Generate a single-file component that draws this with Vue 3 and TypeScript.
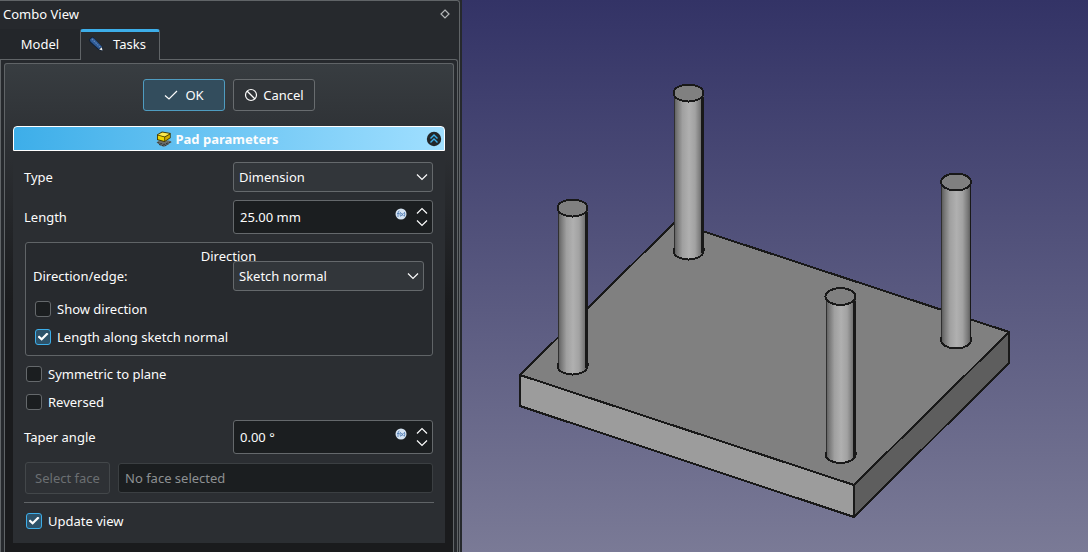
<script setup lang="ts">
import { ref } from 'vue'

interface Peg {
  x: number
  y: number
  edge: number
}

const activeTab = ref<'model' | 'tasks'>('tasks')
const padType = ref('Dimension')
const padLength = ref('25.00 mm')
const directionEdge = ref('Sketch normal')
const showDirection = ref(false)
const alongNormal = ref(true)
const symmetric = ref(false)
const reversed = ref(false)
const taper = ref('0.00 °')
const updateView = ref(true)

// Centre of each top cap, painted from back to front
const pegs: Peg[] = [
  { x: 226.5, y: 93, edge: 2.5 },
  { x: 494, y: 182, edge: 1.5 },
  { x: 110.5, y: 208, edge: 2.5 },
  { x: 378.5, y: 296.5, edge: 2.5 },
]

function step(value: string, delta: number): string {
  const [amount, unit] = value.split(' ')
  return `${(parseFloat(amount) + delta).toFixed(2)} ${unit ?? ''}`.trim()
}
</script>

<template>
  <div class="window">
    <aside class="dock">
      <header class="dock-title">
        <span>Combo View</span>
        <button type="button" class="float-btn" aria-label="Float panel">
          <svg viewBox="0 0 10 10" width="10" height="10"><path d="M5 1 9 5 5 9 1 5Z" fill="none" stroke="#b4b7b9" stroke-width="1.200" /></svg>
        </button>
      </header>

      <div class="tabs" role="tablist">
        <button type="button" role="tab" class="tab" :class="{ active: activeTab === 'model' }" :aria-selected="activeTab === 'model'" @click="activeTab = 'model'">Model</button>
        <button type="button" role="tab" class="tab" :class="{ active: activeTab === 'tasks' }" :aria-selected="activeTab === 'tasks'" @click="activeTab = 'tasks'">
          <svg viewBox="0 0 16 16" width="16" height="16">
            <path d="M4.500 0.500 0.800 3.500 2 6.500 10.500 14 14.500 15 14.800 11.500 7 3Z" fill="#0f2038" />
            <path d="M4.300 1.500 1.800 3.700 2.700 5.800 10.800 13 14 10.800 6.300 2.800Z" fill="#2f5b96" />
            <path d="M4 3 12.500 11.500" stroke="#6286b8" stroke-width="1.200" stroke-dasharray="1.500 1" />
            <path d="M11.200 13.500 13.800 11.300 14.500 14.400Z" fill="#eeeeec" />
          </svg>
          Tasks
        </button>
      </div>

      <div class="pane">
        <div class="frame">
          <div class="actions">
            <button type="button" class="btn primary">
              <svg viewBox="0 0 14 14" width="14" height="14"><path d="M1 7.500 5 11 13 3" fill="none" stroke="#fcfcfc" stroke-width="1.200" /></svg>
              OK
            </button>
            <button type="button" class="btn">
              <svg viewBox="0 0 14 14" width="14" height="14"><g fill="none" stroke="#fcfcfc" stroke-width="1.200"><circle cx="7" cy="7" r="5.500" /><path d="M3 3 11 11" /></g></svg>
              Cancel
            </button>
          </div>

          <section class="task">
            <header class="task-head">
              <svg viewBox="0 0 16 16" width="16" height="16">
                <path d="M0.500 11.500 3 9.500 13 9.500 15.800 11 9 15.500 6 15.200Z" fill="#6b6e6b" />
                <path d="M1.500 11.500 8 13.500 15 10.800M3 13.500 8 15 12.500 13" fill="none" stroke="#2e3436" stroke-dasharray="2 1" />
                <path d="M1 3.500 6 0.500 14.700 2 14.700 7 8.500 11 1 9Z" fill="#403800" />
                <path d="M2 3.800 6.300 1.400 13.500 2.700 8.700 5.500Z" fill="#fce94f" />
                <path d="M1.900 4.600 8.300 6.300 8.300 10 1.900 8.300Z" fill="#edd400" />
                <path d="M9.100 6.300 13.900 3.500 13.900 6.600 9.100 9.800Z" fill="#d0ac00" />
              </svg>
              <h2>Pad parameters</h2>
              <button type="button" class="collapse" aria-label="Collapse">
                <svg viewBox="0 0 16 16" width="16" height="16">
                  <circle cx="8" cy="8" r="7.200" fill="#232629" />
                  <path d="M4.500 7.500 8 4 11.500 7.500M4.500 11.500 8 8 11.500 11.500" fill="none" stroke="#3daee9" stroke-width="1.400" />
                </svg>
              </button>
            </header>

            <form class="form" @submit.prevent>
              <div class="row">
                <label for="type">Type</label>
                <div class="field">
                  <select id="type" v-model="padType" class="box combo">
                    <option>Dimension</option>
                    <option>Through all</option>
                    <option>To first</option>
                  </select>
                  <svg class="chevron" viewBox="0 0 12 8" width="12" height="8"><path d="M1 1.500 6 6.500 11 1.500" /></svg>
                </div>
              </div>

              <div class="row">
                <label for="length">Length</label>
                <div class="field">
                  <input id="length" v-model="padLength" type="text" class="box spin">
                  <button type="button" class="fx" aria-label="Length expression">
                    <svg viewBox="0 0 12 12" width="12" height="12"><circle cx="6" cy="6" r="5.500" fill="#d5e3f2" /><path d="M4.500 3Q3 3 3 5V9M2 5.500H4.500M5.500 4Q4.500 6 5.500 8.500M6.200 5 8.500 8M8.500 5 6.200 8M9.300 4Q10.300 6 9.300 8.500" fill="none" stroke="#5680b5" stroke-width="0.900" /></svg>
                  </button>
                  <div class="steps">
                    <button type="button" aria-label="Increase length" @click="padLength = step(padLength, 1)"><svg viewBox="0 0 12 8" width="12" height="8"><path d="M1 6.500 6 1.500 11 6.500" /></svg></button>
                    <button type="button" aria-label="Decrease length" @click="padLength = step(padLength, -1)"><svg viewBox="0 0 12 8" width="12" height="8"><path d="M1 1.500 6 6.500 11 1.500" /></svg></button>
                  </div>
                </div>
              </div>

              <fieldset class="group">
                <legend>Direction</legend>
                <div class="row inner">
                  <label for="edge">Direction/edge:</label>
                  <div class="field">
                    <select id="edge" v-model="directionEdge" class="box combo">
                      <option>Sketch normal</option>
                      <option>Select reference...</option>
                      <option>Custom direction</option>
                    </select>
                    <svg class="chevron" viewBox="0 0 12 8" width="12" height="8"><path d="M1 1.500 6 6.500 11 1.500" /></svg>
                  </div>
                </div>
                <label class="check first"><input v-model="showDirection" type="checkbox">Show direction</label>
                <label class="check"><input v-model="alongNormal" type="checkbox">Length along sketch normal</label>
              </fieldset>

              <div class="checks">
                <label class="check"><input v-model="symmetric" type="checkbox">Symmetric to plane</label>
                <label class="check"><input v-model="reversed" type="checkbox">Reversed</label>
              </div>

              <div class="row">
                <label for="taper">Taper angle</label>
                <div class="field">
                  <input id="taper" v-model="taper" type="text" class="box spin">
                  <button type="button" class="fx" aria-label="Taper expression">
                    <svg viewBox="0 0 12 12" width="12" height="12"><circle cx="6" cy="6" r="5.500" fill="#d5e3f2" /><path d="M4.500 3Q3 3 3 5V9M2 5.500H4.500M5.500 4Q4.500 6 5.500 8.500M6.200 5 8.500 8M8.500 5 6.200 8M9.300 4Q10.300 6 9.300 8.500" fill="none" stroke="#5680b5" stroke-width="0.900" /></svg>
                  </button>
                  <div class="steps">
                    <button type="button" aria-label="Increase angle" @click="taper = step(taper, 1)"><svg viewBox="0 0 12 8" width="12" height="8"><path d="M1 6.500 6 1.500 11 6.500" /></svg></button>
                    <button type="button" aria-label="Decrease angle" @click="taper = step(taper, -1)"><svg viewBox="0 0 12 8" width="12" height="8"><path d="M1 1.500 6 6.500 11 1.500" /></svg></button>
                  </div>
                </div>
              </div>

              <div class="face">
                <button type="button" class="btn" disabled>Select face</button>
                <input type="text" class="box" value="No face selected" aria-label="Selected face" disabled>
              </div>

              <hr>
              <label class="check last"><input v-model="updateView" type="checkbox">Update view</label>
            </form>
          </section>
        </div>
      </div>
    </aside>

    <main class="viewer">
      <svg viewBox="0 0 626 552" class="scene" role="img" aria-label="Plate with four pegs">
        <defs>
          <linearGradient id="metal">
            <stop offset="0" stop-color="#555" />
            <stop offset="0.12" stop-color="#777" />
            <stop offset="0.3" stop-color="#a0a0a0" />
            <stop offset="0.52" stop-color="#b0b0b0" />
            <stop offset="0.72" stop-color="#a2a2a2" />
            <stop offset="0.9" stop-color="#777" />
            <stop offset="1" stop-color="#555" />
          </linearGradient>
        </defs>
        <g stroke="#191919" stroke-width="2" stroke-linejoin="round" shape-rendering="crispEdges">
          <path d="M58 375 213 222 547 332 392 485Z" fill="#808080" />
          <path d="M58 375 392 485V517L58 406Z" fill="#9c9c9c" />
          <path d="M392 485 547 332V363L392 517Z" fill="#5e5e5e" />
        </g>
        <g v-for="peg in pegs" :key="peg.x" :transform="`translate(${peg.x} ${peg.y})`" shape-rendering="crispEdges">
          <path d="M-15 0V158A15 8.500 0 0 0 15 158V0Z" fill="url(#metal)" />
          <path d="M-14.500 4V158" stroke="#303030" stroke-width="1" />
          <path :d="`M${15 - peg.edge / 2} 4V160`" stroke="#191919" :stroke-width="peg.edge" />
          <path d="M-15 155V158A15 8.500 0 0 0 15 158V155" fill="none" stroke="#191919" stroke-width="2" />
          <ellipse rx="15" ry="8.500" fill="#808080" stroke="#191919" stroke-width="2" />
        </g>
      </svg>
    </main>
  </div>
</template>

<style>
body {
  margin: 0;
  background: #26292d;
}
</style>

<style scoped>
.window {
  display: grid;
  grid-template-columns: 231fr 313fr;
  min-height: 100vh;
  background: #26292d;
  color: #fcfcfc;
  font: 13px/18px "Noto Sans", "Open Sans", sans-serif;
}
.window *,
.window {
  box-sizing: border-box;
}
button,
input,
select {
  margin: 0;
  padding: 0;
  border: 0;
  background: none;
  color: inherit;
  font: inherit;
}
svg {
  display: block;
  flex: none;
}
.dock {
  display: flex;
  flex-direction: column;
  margin-right: 2px;
  border: solid #606467;
  border-width: 1px 1px 0 0;
  border-top-right-radius: 3px;
}
.dock-title {
  display: flex;
  align-items: center;
  justify-content: space-between;
  height: 28px;
  padding: 0 9px 2px 3px;
}
.tabs {
  display: flex;
  height: 31px;
  margin-bottom: -1px;
  position: relative;
}
.tab {
  display: flex;
  align-items: center;
  justify-content: center;
  gap: 9px;
  width: 80px;
  height: 30px;
  background: #23262a;
}
.tab.active {
  height: 31px;
  border: solid #606467;
  border-width: 3px 1px 0;
  border-top-color: #3daee9;
  border-radius: 3px 3px 0 0;
  padding: 0 6px 4px 0;
  background: #282b2f;
}
.pane {
  flex: 1;
  display: flex;
  flex-direction: column;
  margin-right: 1px;
  padding: 3px 3px 0;
  border: 1px solid #606467;
  border-bottom: 0;
  border-top-right-radius: 3px;
}
.frame {
  flex: 1;
  padding: 15px 8px 8px;
  border: 1px solid #606467;
  border-bottom: 0;
  border-radius: 3px 3px 0 0;
  background: linear-gradient(#383d41, #2d3034 80px, #1a1b1d 240px);
}
.actions {
  display: flex;
  justify-content: center;
  gap: 8px;
  margin-bottom: 15px;
}
.btn {
  display: flex;
  align-items: center;
  justify-content: center;
  gap: 5px;
  width: 82px;
  height: 32px;
  border: 1px solid #686c6f;
  border-radius: 3px;
  background: #303438;
}
.btn.primary {
  gap: 7px;
  border-color: #4f9cc0;
  background: #334d5d;
}
.btn:disabled {
  width: 85px;
  border-color: #43474a;
  background: #2e3135;
  color: #6b6f72;
}
.task-head {
  position: relative;
  display: flex;
  align-items: center;
  justify-content: center;
  gap: 4px;
  height: 25px;
  padding-right: 24px;
  border: 1px solid #fff;
  border-radius: 4px 4px 0 0;
  background: linear-gradient(90deg, #3daee9, #a0dfff);
}
h2 {
  margin: 0;
  font-size: 13px;
  line-height: 18px;
}
.collapse {
  position: absolute;
  top: 4px;
  right: 2px;
}
.form {
  padding: 11px 12px 14px 11px;
  background: #2b2e32;
}
.row {
  display: grid;
  grid-template-columns: 209fr 200fr;
  align-items: center;
  margin-bottom: 8px;
}
.row.inner {
  grid-template-columns: 200fr 191fr;
  clear: both;
  margin: 0;
}
.field {
  position: relative;
}
.box {
  display: block;
  width: 100%;
  height: 30px;
  padding: 0 6px;
  border: 1px solid #65696c;
  border-radius: 3px;
  background: #1b1e20;
}
.combo {
  appearance: none;
  padding: 0 5px;
  background: #32363a;
}
.spin {
  height: 34px;
}
.chevron {
  position: absolute;
  top: 11px;
  right: 5px;
  pointer-events: none;
}
.chevron path,
.steps path {
  fill: none;
  stroke: #fcfcfc;
  stroke-width: 1.2;
}
.fx {
  position: absolute;
  top: 8px;
  right: 26px;
}
.steps {
  position: absolute;
  top: 7px;
  right: 5px;
  display: grid;
  gap: 4px;
}
.group {
  min-width: 0;
  margin: 0 0 10px 1px;
  padding: 4px 8px 10px 7px;
  border: 1px solid #606467;
  border-radius: 3px;
  background: #272a2e;
}
legend {
  float: left;
  width: 100%;
  height: 14px;
  padding: 0;
  text-align: center;
}
.check {
  display: flex;
  align-items: center;
  gap: 6px;
  width: fit-content;
  height: 16px;
  margin: 12px 0 0 2px;
}
.check.first,
.check.last {
  margin-top: 10px;
}
.checks {
  margin-bottom: 10px;
}
.checks .check:first-child {
  margin-top: 0;
}
.check input {
  appearance: none;
  display: grid;
  place-items: center;
  width: 16px;
  height: 16px;
  border: 1px solid #65696c;
  border-radius: 3px;
  background: #1b1e20;
}
.check input:checked {
  border-color: #3daee9;
  background: #2d5269;
}
.check input:checked::before {
  content: "";
  width: 11px;
  height: 9px;
  background: #fcfcfc;
  clip-path: polygon(0 50%, 15% 32%, 38% 58%, 85% 0, 100% 18%, 38% 92%);
}
.face {
  display: flex;
  align-items: center;
  gap: 8px;
  margin-left: 1px;
}
.face .btn {
  flex: none;
}
.face .box {
  flex: 1;
  min-width: 0;
  border-color: #3b3f42;
  color: #8d9092;
}
hr {
  height: 1px;
  margin: 8px -1px 0 0;
  border: 0;
  background: #606467;
}
.viewer {
  display: grid;
  min-width: 0;
  background: linear-gradient(#333366, #7a7a96);
}
.scene {
  width: 100%;
  height: 100%;
}
</style>
